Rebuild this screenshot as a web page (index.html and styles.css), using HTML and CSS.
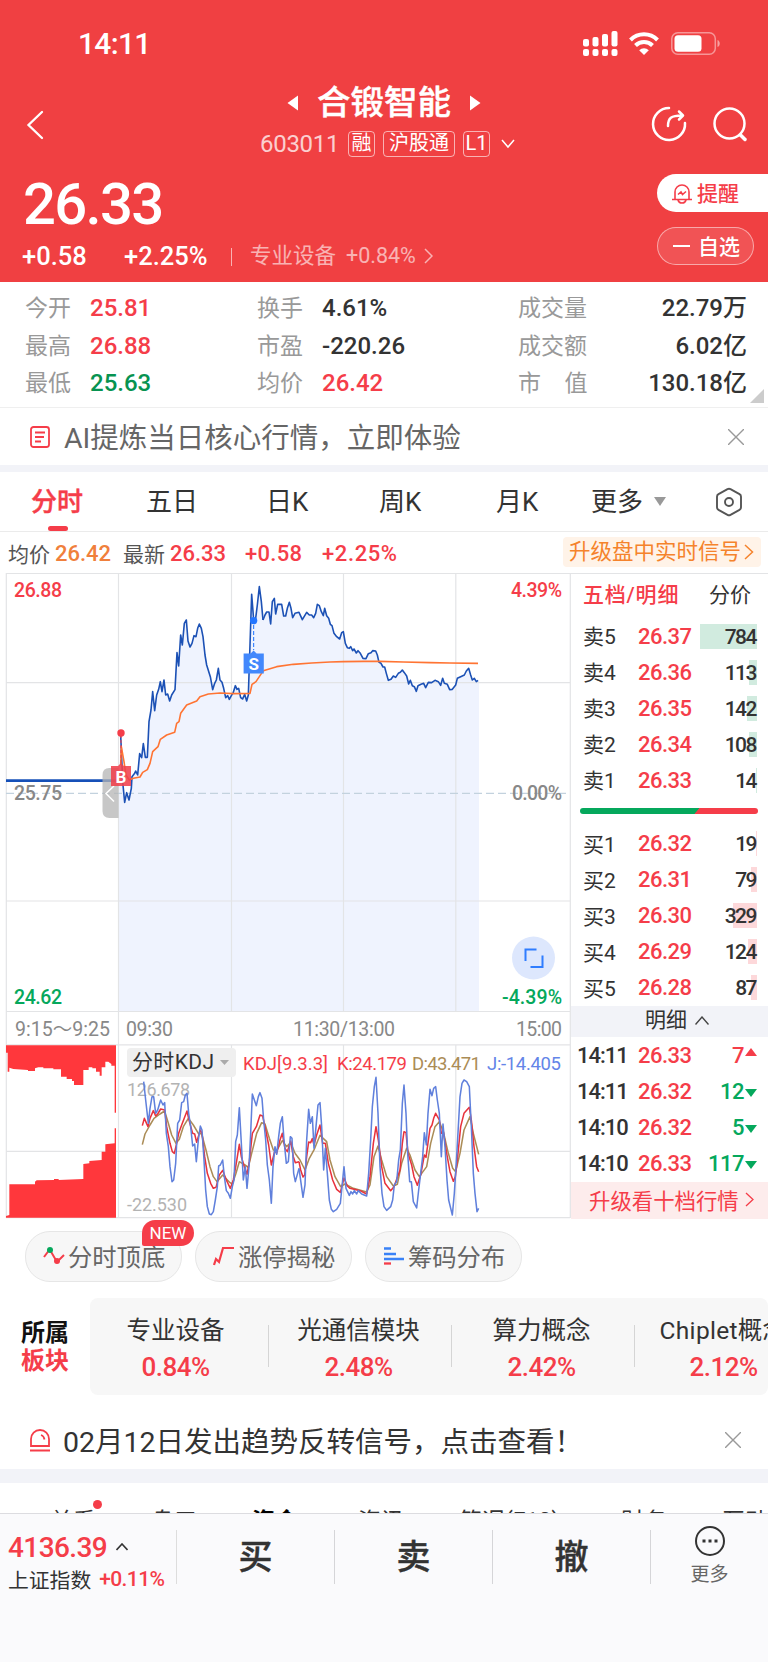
FILE: index.html
```html
<!DOCTYPE html>
<html lang="zh-CN">
<head>
    <meta charset="UTF-8">
    <meta name="viewport" content="width=device-width, initial-scale=1.0">
    <title>合锻智能 603011</title>
    <link rel="stylesheet" href="styles.css">
</head>
<body>

    <header class="header">
        <div class="status-bar">
            <span class="clock">14:11</span>
            <svg class="status-icons" width="140" height="26" viewBox="0 0 140 26" fill="#fff">
                <rect x="1" y="8" width="6" height="7.5" rx="2"/>
                <rect x="10.500" y="6" width="6" height="9.500" rx="2"/>
                <rect x="20" y="3" width="6" height="12.500" rx="2"/>
                <rect x="29.500" y="0" width="6" height="15.500" rx="2"/>
                <rect x="1" y="18" width="6" height="7" rx="2"/>
                <rect x="10.500" y="18" width="6" height="7" rx="2"/>
                <rect x="20" y="18" width="6" height="7" rx="2"/>
                <rect x="29.500" y="18" width="6" height="7" rx="2"/>
                <g fill="none" stroke="#fff" stroke-width="4">
                    <path d="M48.500 9a19 19 0 0 1 27 0"/>
                    <path d="M53.500 14.500a12 12 0 0 1 17 0"/>
                </g>
                <path d="M62 24l-4.800-4.800a7 7 0 0 1 9.600 0z"/>
                <rect x="89.800" y="1.800" width="43.500" height="21.500" rx="6" fill="none" stroke="#fff" stroke-opacity=".45" stroke-width="1.500"/>
                <rect x="92.500" y="4.300" width="27" height="16.500" rx="3.500"/>
                <path d="M135.500 9c3 1 3 6 0 7z" fill-opacity=".5"/>
            </svg>
        </div>

        <div class="title-bar">
            <svg class="back" width="18" height="30" viewBox="0 0 18 30" fill="none" stroke="#fff" stroke-width="2.300" stroke-linecap="round">
                <path d="M16 2L2.500 15L16 28"/>
            </svg>
            <div class="title-box">
                <div class="name-row">
                    <svg width="12" height="16" viewBox="0 0 12 16" fill="#fff"><path d="M0.500 8L11 .5v15z"/></svg>
                    <h1>合锻智能</h1>
                    <svg width="12" height="16" viewBox="0 0 12 16" fill="#fff"><path d="M11.500 8L1 .5v15z"/></svg>
                </div>
                <div class="code-row">
                    <span class="code">603011</span>
                    <span class="tag tag-rong">融</span>
                    <span class="tag tag-hgt">沪股通</span>
                    <span class="tag tag-level">L1</span>
                    <svg width="14" height="10" viewBox="0 0 14 10" fill="none" stroke="#fff" stroke-width="1.500"><path d="M1 1l6 7l6-7"/></svg>
                </div>
            </div>
            <div class="title-actions">
                <svg width="36" height="36" viewBox="0 0 36 36" fill="none" stroke="#fff" stroke-width="2.500" stroke-linecap="round" stroke-linejoin="round">
                    <path d="M18 2A16 16 0 1 0 34 17"/>
                    <path d="M17 20c0-8 3-10.500 14-10.500M28 5.500l4 4l-4 4"/>
                </svg>
                <svg width="36" height="36" viewBox="0 0 36 36" fill="none" stroke="#fff" stroke-width="2.500" stroke-linecap="round">
                    <circle cx="17.500" cy="17.500" r="15"/>
                    <path d="M28.500 29l4.500 4.500" stroke-width="3.500"/>
                </svg>
            </div>
        </div>

        <div class="price-bar">
            <div>
                <div class="price">26.33</div>
                <div class="change-row">
                    <span class="change">+0.58</span>
                    <span class="percent">+2.25%</span>
                    <span class="industry">专业设备</span>
                    <span class="industry-rate">+0.84%</span>
                    <svg width="9" height="16" viewBox="0 0 9 16" fill="none" stroke="#fff" stroke-opacity=".6" stroke-width="1.500"><path d="M1 1l7 7l-7 7"/></svg>
                </div>
            </div>
            <div class="price-actions">
                <button class="alert-button">
                    <svg width="20" height="21" viewBox="0 0 20 21" fill="none" stroke="#f53d49" stroke-width="1.600">
                        <path d="M3 16V9a7 7 0 0 1 14 0v7M0 16.500h20M6 17c1 4 7 4 8 0M6 11.500l3-2.500l1.500 2.500l3.500-3"/>
                    </svg>
                    <span>提醒</span>
                </button>
                <button class="watch-button"><i></i><span>自选</span></button>
            </div>
        </div>
    </header>

    <section class="stats">
        <div class="stat-row">
            <span class="label">今开</span><b class="red">25.81</b>
            <span class="label">换手</span><b>4.61%</b>
            <span class="label">成交量</span><b class="right">22.79万</b>
        </div>
        <div class="stat-row">
            <span class="label">最高</span><b class="red">26.88</b>
            <span class="label">市盈</span><b>-220.26</b>
            <span class="label">成交额</span><b class="right">6.02亿</b>
        </div>
        <div class="stat-row">
            <span class="label">最低</span><b class="dark-green">25.63</b>
            <span class="label">均价</span><b class="red">26.42</b>
            <span class="label">市&emsp;值</span><b class="right">130.18亿</b>
        </div>
        <i class="corner"></i>
    </section>

    <section class="notice ai-notice">
        <svg class="notice-icon" width="20" height="22" viewBox="0 0 20 22" fill="none" stroke="#f53d49" stroke-width="1.800">
            <rect x="1" y="1" width="18" height="20" rx="2.500"/>
            <path d="M5 6.500h10M5 11h9M5 15.500h6"/>
        </svg>
        <span>AI提炼当日核心行情，立即体验</span>
        <svg class="close" width="16" height="16" viewBox="0 0 16 16" stroke="#999" stroke-width="1.400"><path d="M0 0l16 16M16 0L0 16"/></svg>
    </section>

    <nav class="tabs">
        <span class="tab active">分时</span>
        <span class="tab">五日</span>
        <span class="tab">日K</span>
        <span class="tab">周K</span>
        <span class="tab">月K</span>
        <span class="tab more">更多<i></i></span>
        <svg width="28" height="30" viewBox="0 0 28 30" fill="none" stroke="#555" stroke-width="1.900" stroke-linejoin="round">
            <path d="M12.500 2.200q1.500-.8 3 0l9 5q1.500.8 1.500 2.500v10.600q0 1.700-1.500 2.500l-9 5q-1.500.8-3 0l-9-5q-1.500-.8-1.500-2.500V9.700q0-1.700 1.500-2.500z"/>
            <circle cx="14" cy="15" r="4"/>
        </svg>
    </nav>

    <div class="quote-line">
        <span class="q-label">均价</span><span class="q-avg">26.42</span>
        <span class="q-label">最新</span><span class="q-last">26.33</span>
        <span class="q-change">+0.58</span>
        <span class="q-percent">+2.25%</span>
        <a class="upgrade-signal">升级盘中实时信号<svg width="10" height="16" viewBox="0 0 10 16" fill="none" stroke="#f5832c" stroke-width="1.500"><path d="M1 1l7.500 7l-7.500 7"/></svg></a>
    </div>

    <main class="market">
        <svg class="chart" width="571" height="646" viewBox="0 573 571 646">
            <!-- price area -->
            <g transform="translate(0 565) scale(.33333)" fill="#eff3fe">
                <path d="M357 1339V640L362 510L366 600L374 712L380 683L387 705L396 635L407 618L413 630L419 566L425 578L430 536L436 577L442 577L447 470L458 380L464 437L470 390L481 350L486 380L492 345L497 390L503 387L509 408L515 390L525 374L531 263L536 303L542 210L547 240L553 175L559 165L564 228L570 246L582 212L588 215L598 177L604 190L609 215L615 270L620 300L631 335L638 374L649 345L655 310L660 345L666 352L677 398L688 403L706 362L716 370L722 398L734 388L740 408L745 390L755 88L761 165L767 160L778 65L789 165L794 160V1339z"/>
                <path transform="translate(690 0)" d="M98 1339V165L105 150L110 141L117 141L122 177L127 110L133 100L137 147L143 118L155 118L161 153L167 153L178 112L188 158L195 145L207 142L217 164L230 142L238 150L251 158L262 118L268 122L280 152L284 130L290 152L301 178L312 205L329 222L335 203L340 200L346 235L352 248L379 264L384 257L399 280L408 281L415 266L428 257L437 258L447 292L464 306L475 346L490 333L497 337L517 315L530 333L536 357L541 346L559 379L564 362L581 355L587 368L595 352L615 346L632 361L638 340L643 355L652 358L659 374L667 373L677 360L682 340L703 330L716 310L727 345L733 340L739 350L747 346V1339z"/>
            </g>

            <!-- grid -->
            <g stroke="#e3e4e6" stroke-width="1.200" fill="none">
                <path d="M6 573.500H571M6 682.700H570M6 901H570M6 1011.500H570M6 1044.800H570M6 1151.300H570M6 1217.700H570"/>
                <path d="M6.300 573V1218M118.500 573V1218M231.500 573V1011M231.500 1045V1218M343.500 573V1011M343.500 1045V1218M455.800 573V1011M455.800 1045V1218M570.300 573V1218"/>
            </g>
            <path d="M6 793.300H570" stroke="#c3d2de" stroke-width="1.200" stroke-dasharray="8 4"/>

            <!-- price and average lines -->
            <path d="M6 780.700H118" stroke="#1650b8" stroke-width="2.800"/>
            <g transform="translate(0 565) scale(.33333)" fill="none" stroke="#1c51b5" stroke-width="4.800" stroke-linejoin="round">
                <polyline points="362,510 366,600 368,650 374,712 380,683 387,705 394,670 396,635 404,625 407,618 413,630 419,566 425,578 430,536 436,577 442,577 447,470 453,435 458,380 464,437 470,390 476,373 481,350 486,380 492,345 497,390 503,387 509,408 515,390 525,374 531,263 536,303 542,210 547,240 553,175 559,165 564,228 570,246 576,235 582,212 588,215 593,190 598,177 604,190 609,215 615,270 620,300 631,335 638,374 644,355 649,345 655,310 660,345 666,352 671,370 677,398 683,392 688,403 694,392 700,382 706,362 711,373 716,370 722,398 728,402 734,388 740,408 745,390 750,240 755,88 761,165 767,160 772,120 778,65 784,110 789,165"/>
                <polyline transform="translate(690 0)" points="99,165 105,150 110,141 117,141 122,177 127,110 133,100 137,147 143,118 155,118 161,153 167,153 172,130 178,112 183,130 188,158 195,145 207,142 217,164 230,142 238,150 245,150 251,158 257,145 262,118 268,122 274,140 280,152 284,130 290,152 296,160 301,178 306,182 312,205 320,215 329,222 335,203 340,200 346,235 352,248 358,250 362,245 368,257 372,252 379,264 384,257 391,265 399,280 408,281 415,266 423,263 428,257 437,258 442,270 447,292 453,295 459,306 464,306 469,325 475,346 483,343 490,333 497,337 505,325 511,322 517,315 523,323 530,333 536,357 541,346 547,362 553,365 559,379 564,362 573,358 581,355 587,368 595,352 605,353 615,346 625,350 632,361 638,340 643,355 652,358 659,374 667,373 677,360 682,340 692,335 703,330 709,318 716,310 722,330 727,345 733,340 739,350 744,346"/>
            </g>
            <g transform="translate(0 565) scale(.33333)" fill="none" stroke="#ff7433" stroke-width="4.800" stroke-linejoin="round">
                <polyline points="362,600 364,545 372,590 378,630 388,645 400,640 420,636 428,622 442,614 450,595 458,560 474,545 481,523 500,510 524,502 530,475 537,470 542,445 560,420 590,408 600,395 625,387 660,384 700,386 750,385 756,358 768,350 778,335 790,317"/>
                <polyline transform="translate(690 0)" points="100,317 140,305 190,298 245,294 300,291 340,290 400,289 450,289 520,291 600,293 660,294 744,295"/>
            </g>

            <!-- pull handle -->
            <path d="M118.500 768h-9q-7 0-7 7v36q0 7 7 7h9z" fill="#b4b4b4" fill-opacity=".75"/>
            <path d="M114 786l-8 7.500l8 8" fill="none" stroke="#fff" stroke-width="1.500"/>

            <!-- trade markers -->
            <path d="M121 735V764" stroke="#f0414c" stroke-dasharray="3 2"/>
            <circle cx="121" cy="733" r="3.700" fill="#f53d49"/>
            <path d="M111 766h7l3-3l3 3h7v20h-20z" fill="#f0414c" fill-opacity=".88"/>
            <text class="mark" x="121" y="782.500">B</text>
            <path d="M253.600 625V650" stroke="#3d86ff" stroke-width="1.200" stroke-dasharray="4 2"/>
            <circle cx="253.600" cy="620.600" r="3.700" fill="#2476ff"/>
            <path d="M243.600 653.500h7l3-3l3 3h7.200v20h-20.200z" fill="#4288fc"/>
            <text class="mark" x="253.700" y="669.500">S</text>

            <!-- axis labels -->
            <g class="axis">
                <text x="14" y="596.500" textLength="48" fill="#f53d49">26.88</text>
                <text x="511" y="596.500" textLength="51" fill="#f53d49">4.39%</text>
                <text x="14" y="800" textLength="48">25.75</text>
                <text x="512" y="800" textLength="50">0.00%</text>
                <text x="14" y="1003.500" textLength="48" fill="#05a85c">24.62</text>
                <text x="502" y="1003.500" textLength="60" fill="#05a85c">-4.39%</text>
            </g>
            <g class="axis axis-time">
                <text x="15" y="1035.500" textLength="95">9:15～9:25</text>
                <text x="126" y="1035.500" textLength="47">09:30</text>
                <text x="293" y="1035.500" textLength="102">11:30/13:00</text>
                <text x="516" y="1035.500" textLength="46">15:00</text>
            </g>

            <!-- full screen button -->
            <circle cx="533.500" cy="958" r="21.500" fill="#dde7fd"/>
            <path d="M525.500 961v-11.500h11M530.500 967h12v-11.500" fill="none" stroke="#2f7dff" stroke-width="2"/>

            <!-- auction volume -->
            <g transform="translate(0 980) scale(.33333)" fill="#ff373c">
                <path d="M18 196H348V398H344V257H334V252L325 245H316V262H305V287H299V275H288V265H277V262H266V270H250V315H222V303H216V297H200V290H183V268H160V265H130V262H115L105 265V273H84V270L40 267L28 263V275H23V218H18z"/>
                <path d="M18 713H348V445H344V490L316 493V515H305V540L268 543V550L250 552V597L176 600V597H162V600L110 601L105 605V613H28V705L18 708z"/>
            </g>

            <!-- kdj -->
            <rect x="127" y="1048" width="109" height="29" rx="4" fill="#efefef"/>
            <text x="132" y="1069" textLength="82" class="kdj-name">分时KDJ</text>
            <path d="M220 1060h9l-4.500 5z" fill="#aaa"/>
            <g class="kdj-value">
                <text x="243" y="1069.500" textLength="85" fill="#f53d49">KDJ[9.3.3]</text>
                <text x="337" y="1069.500" textLength="70" fill="#f53d49">K:24.179</text>
                <text x="412" y="1069.500" textLength="69" fill="#ab8c56">D:43.471</text>
                <text x="487" y="1069.500" textLength="74" fill="#6485e8">J:-14.405</text>
            </g>
            <g class="kdj-range">
                <text x="127" y="1096" textLength="63">126.678</text>
                <text x="127" y="1210.500" textLength="60">-22.530</text>
            </g>
            <g transform="translate(0 980) scale(.33333)" fill="none" stroke-width="4.600" stroke-linejoin="round">
                <polyline stroke="#ab8c56" points="427,494 435,462 450,435 462,415 480,402 494,393 505,430 515,465 528,490 538,478 550,440 565,415 580,435 595,460 605,462 618,510 630,560 640,590 651,605 668,585 690,608 697,612 708,580 718,545 735,555 745,562 755,520 770,460 785,428 795,432 808,475 820,510 830,512 847,482 860,500 872,487 885,520"/>
                <polyline stroke="#e8323c" points="427,437 433,415 444,440 450,415 460,392 467,408 473,402 482,387 494,390 500,440 510,490 517,515 523,520 530,490 536,460 545,435 561,393 567,420 578,460 584,462 590,487 601,450 606,460 614,530 622,580 632,610 640,625 648,622 658,585 668,571 679,600 691,625 700,600 708,555 718,493 724,530 733,560 741,583 748,545 757,460 769,440 780,405 788,408 797,450 806,495 814,555 825,510 830,520 840,480 847,460 855,505 862,515 872,483 880,530 886,548 897,545"/>
                <polyline stroke="#6080dc" points="431,305 437,360 445,430 450,385 456,350 461,350 467,400 473,390 482,360 489,375 494,368 499,460 505,500 510,560 516,605 521,600 527,550 533,430 539,420 545,368 551,365 556,345 561,340 566,400 572,440 578,498 584,492 589,545 595,480 601,438 606,450 612,540 617,630 622,680 628,702 634,704 640,695 646,660 652,620 656,558 661,555 668,540 673,590 679,632 685,640 691,655 697,620 702,600 707,485 712,465 718,383 724,490 730,600 736,560 741,625 747,560 752,460 757,342 763,360 769,377 775,350 780,338 786,355 791,420 797,480 802,555 808,600 814,670 819,560 825,500 830,523 836,470 841,430 847,410 852,480 859,550 865,545 871,470 876,475 881,580 886,605 897,565"/>
            </g>
            <g transform="translate(270 940) scale(.33333)" fill="none" stroke-width="4.600" stroke-linejoin="round">
                <polyline stroke="#ab8c56" points="75,640 90,660 105,690 118,655 132,630 150,586 170,605 180,660 195,710 212,740 225,732 250,745 290,756 300,735 312,650 324,618 335,660 350,710 370,738 382,733 395,670 410,625 420,645 435,690 448,710 470,680 482,610 495,560 508,545 520,575 535,640 548,685 557,695 570,640 582,570 600,530 610,580 626,643"/>
                <polyline stroke="#e8323c" points="87,665 92,690 99,711 104,705 110,650 116,606 122,608 127,596 132,615 140,585 150,555 158,610 166,610 175,670 188,720 200,748 211,757 222,714 232,738 240,745 270,752 290,762 300,710 310,610 318,560 325,600 335,680 345,730 362,752 372,740 390,690 397,610 402,575 408,578 414,640 425,675 432,710 442,736 452,705 463,645 468,652 480,565 486,555 491,535 497,520 508,540 514,580 520,575 530,640 540,695 550,724 556,710 563,650 572,560 582,520 598,502 604,540 612,620 620,680 626,695"/>
                <polyline stroke="#6080dc" points="87,685 99,772 105,735 110,600 116,508 121,550 127,530 132,625 138,560 144,495 150,488 155,560 161,690 166,625 172,700 178,780 184,808 190,815 200,808 211,790 216,740 222,680 228,745 238,766 243,755 248,762 253,752 260,762 265,752 275,762 290,768 296,700 302,600 307,500 313,440 318,412 324,520 330,680 336,760 342,800 350,811 362,800 368,780 373,735 380,725 386,660 391,630 397,490 402,435 408,520 413,640 419,725 424,725 430,785 440,804 446,750 452,700 458,650 463,578 469,615 474,520 480,448 486,467 491,445 497,440 502,480 508,520 514,650 519,552 525,620 531,720 536,780 547,825 553,760 560,650 565,560 570,470 576,430 582,420 590,425 598,440 604,560 610,700 615,760 621,815 626,805"/>
            </g>
        </svg>

        <aside class="book">
            <div class="book-head"><b>五档/明细</b><span>分价</span></div>
            <div class="order sell"><span>卖5</span><b>26.37</b><em><i style="width:57px"></i>784</em></div>
            <div class="order sell"><span>卖4</span><b>26.36</b><em><i style="width:8px"></i>113</em></div>
            <div class="order sell"><span>卖3</span><b>26.35</b><em><i style="width:10px"></i>142</em></div>
            <div class="order sell"><span>卖2</span><b>26.34</b><em><i style="width:8px"></i>108</em></div>
            <div class="order sell"><span>卖1</span><b>26.33</b><em><i style="width:1px"></i>14</em></div>
            <div class="ratio"></div>
            <div class="order buy"><span>买1</span><b>26.32</b><em><i style="width:1px"></i>19</em></div>
            <div class="order buy"><span>买2</span><b>26.31</b><em><i style="width:6px"></i>79</em></div>
            <div class="order buy"><span>买3</span><b>26.30</b><em><i style="width:24px"></i>329</em></div>
            <div class="order buy"><span>买4</span><b>26.29</b><em><i style="width:9px"></i>124</em></div>
            <div class="order buy"><span>买5</span><b>26.28</b><em><i style="width:6px"></i>87</em></div>
            <div class="detail-head">明细<svg width="14" height="9" viewBox="0 0 14 9" fill="none" stroke="#444" stroke-width="1.400"><path d="M.5 8.500L7 1l6.500 7.500"/></svg></div>
            <div class="tick up"><span>14:11</span><b>26.33</b><em>7</em><i></i></div>
            <div class="tick down"><span>14:11</span><b>26.32</b><em>12</em><i></i></div>
            <div class="tick down"><span>14:10</span><b>26.32</b><em>5</em><i></i></div>
            <div class="tick down"><span>14:10</span><b>26.33</b><em>117</em><i></i></div>
            <a class="upgrade-level">升级看十档行情<svg width="9" height="15" viewBox="0 0 9 15" fill="none" stroke="#f53d49" stroke-width="1.300"><path d="M1 1l7 6.500l-7 6.500"/></svg></a>
        </aside>
    </main>

    <section class="chips">
        <button class="chip">
            <svg width="22" height="20" viewBox="0 0 22 20" fill="none" stroke-width="2"><path d="M1 11l6-8" stroke="#f53d49"/><path d="M7 4l7 12l7-7" stroke="#f53d49"/><circle cx="7" cy="4" r="3" fill="#05a85c"/><circle cx="14" cy="15" r="3" fill="#f53d49"/></svg>
            <span>分时顶底</span>
            <span class="new">NEW</span>
        </button>
        <button class="chip">
            <svg width="22" height="20" viewBox="0 0 22 20" fill="none" stroke="#f53d49" stroke-width="2.200"><path d="M1 19l2-6l3 3l4-14h11"/></svg>
            <span>涨停揭秘</span>
        </button>
        <button class="chip">
            <svg width="22" height="20" viewBox="0 0 22 20" fill="none" stroke="#3a82f7" stroke-width="2.300"><path d="M1 2.500h7M1 8h12M1 13h20"/><path d="M1 17.500h7" stroke="#f53d49"/></svg>
            <span>筹码分布</span>
        </button>
    </section>

    <section class="sectors">
        <div class="sector-title">所属<br><span>板块</span></div>
        <div class="sector-list">
            <div class="sector">专业设备<b>0.84%</b></div>
            <div class="sector">光通信模块<b>2.48%</b></div>
            <div class="sector">算力概念<b>2.42%</b></div>
            <div class="sector">Chiplet概念<b>2.12%</b></div>
        </div>
    </section>

    <section class="notice signal-notice">
        <svg class="notice-icon" width="22" height="23" viewBox="0 0 22 23" fill="none" stroke="#f53d49" stroke-width="1.800">
            <path d="M2 17V10a9 9 0 0 1 18 0v7zM1 21.500h20M12 6q3 1 3.500 4.500"/>
        </svg>
        <span>02月12日发出趋势反转信号，点击查看！</span>
        <svg class="close" width="16" height="16" viewBox="0 0 16 16" stroke="#999" stroke-width="1.400"><path d="M0 0l16 16M16 0L0 16"/></svg>
    </section>

    <nav class="sub-tabs">
        <span class="dot">关系</span>
        <span>盘口</span>
        <span class="active">资金</span>
        <span>资讯</span>
        <span>简况(F10)</span>
        <span>财务</span>
        <span>互动</span>
    </nav>

    <footer class="trade-bar">
        <div class="index">
            <div class="index-value">4136.39<svg width="12" height="8" viewBox="0 0 12 8" fill="none" stroke="#333" stroke-width="1.600"><path d="M.5 7L6 1l5.500 6"/></svg></div>
            <div class="index-name">上证指数<b>+0.11%</b></div>
        </div>
        <div class="trade">买</div>
        <div class="trade">卖</div>
        <div class="trade">撤</div>
        <div class="trade-more">
            <svg width="32" height="32" viewBox="0 0 32 32" fill="none" stroke="#333" stroke-width="2"><circle cx="16" cy="16" r="14"/><path d="M8.500 16h3M14.500 16h3M20.500 16h3" stroke-width="3"/></svg>
            更多
        </div>
    </footer>

</body>
</html>
```
FILE: styles.css
```css
* {
    box-sizing: border-box;
}

body {
    margin: 0;
    width: 768px;
    height: 1662px;
    overflow: hidden;
    background: #fff;
    color: #333;
    font-family: Roboto, "Noto Sans CJK SC", sans-serif;
    white-space: nowrap;
}

b, em, i, h1 {
    font-style: normal;
    font-weight: 500;
}

svg {
    display: block;
    flex: none;
}

button {
    font-family: inherit;
    border: none;
    padding: 0;
}

.red { color: #f53d49; }
.dark-green { color: #079351; }

/* header */
.header {
    height: 282px;
    background: #f04042;
    color: #fff;
}

.status-bar {
    height: 76px;
    padding: 31px 46px 0 78px;
    display: flex;
    justify-content: space-between;
}

.clock {
    font-size: 30px;
    line-height: 26px;
    font-weight: 500;
    letter-spacing: -0.700px;
}

.title-bar {
    height: 90px;
    display: flex;
    align-items: flex-start;
}

.back {
    margin: 34px 0 0 26px;
}

.title-box {
    width: 430px;
    margin-left: 177px;
}

.name-row {
    display: flex;
    align-items: center;
    gap: 18px;
    height: 54px;
    padding-left: 65px;
}

.name-row h1 {
    margin: 0;
    font-size: 33.500px;
    line-height: 54px;
    -webkit-text-stroke: .4px #fff;
}

.code-row {
    display: flex;
    align-items: center;
    height: 27px;
    padding-left: 38px;
}

.code {
    width: 88px;
    font-size: 24px;
    letter-spacing: -0.300px;
    opacity: .75;
}

.tag {
    height: 26px;
    border: 1.500px solid rgba(255, 255, 255, .6);
    border-radius: 4px;
    font-size: 20px;
    line-height: 22px;
    text-align: center;
    margin-right: 8px;
}

.tag-rong { width: 27px; }
.tag-hgt { width: 72px; }
.tag-level { width: 27px; margin-right: 11px; }

.name-row,
.code-row {
    margin-left: 0;
}

.name-row { padding-left: 66px; }
.code-row { padding-left: 39px; }

.title-actions {
    display: flex;
    gap: 25px;
    margin: 30px 0 0 0;
}

.price-bar {
    display: flex;
    justify-content: space-between;
}

.price {
    padding-left: 23px;
    height: 74px;
    line-height: 76px;
    font-size: 58px;
    font-weight: 500;
    letter-spacing: -1.700px;
}

.change-row {
    display: flex;
    align-items: center;
    height: 32px;
    padding-left: 22px;
    font-size: 25.500px;
    font-weight: 500;
}

.change { width: 102px; }
.percent { width: 107px; }

.industry {
    position: relative;
    width: 98px;
    padding-left: 2px;
    margin-left: 17px;
    line-height: 29px;
    margin-top: -2px;
    font-size: 21.500px;
    font-weight: 400;
    opacity: .6;
}

.industry::before {
    content: "";
    position: absolute;
    left: -17px;
    top: 7px;
    width: 1px;
    height: 18px;
    background: #fff;
}

.industry-rate {
    width: 78px;
    margin-top: -2px;
    font-size: 21.500px;
    font-weight: 400;
    opacity: .6;
}

.price-actions {
    width: 111px;
    padding-top: 8px;
}

.alert-button,
.watch-button {
    display: flex;
    align-items: center;
    height: 38px;
    font-size: 21px;
    font-weight: 500;
}

.alert-button span,
.watch-button span {
    margin-top: -2px;
}

.alert-button {
    width: 111px;
    padding-left: 15px;
    gap: 5px;
    border-radius: 19px 0 0 19px;
    background: #fff;
    color: #f53d49;
}

.watch-button {
    width: 97px;
    margin-top: 15px;
    padding-left: 15px;
    gap: 8px;
    border: 1px solid rgba(255, 255, 255, .5);
    border-radius: 19px;
    background: rgba(255, 255, 255, .1);
    color: #fff;
}

.watch-button i {
    width: 17px;
    height: 2px;
    background: #fff;
}

/* stats */
.stats {
    position: relative;
    height: 126px;
    padding-top: 8px;
    border-bottom: 1.500px solid #efefef;
}

.stat-row {
    display: grid;
    grid-template-columns: 65px 167px 65px 196px 80px 149px;
    padding-left: 25px;
    height: 37.700px;
    line-height: 37px;
    font-size: 24px;
}

.stat-row .label {
    color: #999;
    font-size: 23px;
}

.stat-row .right {
    text-align: right;
}

.corner {
    position: absolute;
    right: 4px;
    bottom: 4px;
    border-left: 14px solid transparent;
    border-bottom: 14px solid #ccc;
}

/* notices */
.notice {
    display: flex;
    align-items: center;
    font-size: 28.500px;
}

.notice .close {
    margin-left: auto;
}

.notice span {
    margin-top: -2px;
}

.ai-notice {
    height: 64px;
    padding: 0 24px 0 30px;
    border-bottom: 7px solid #f2f3f8;
    color: #666;
}

.ai-notice span {
    margin-left: 14px;
}

.signal-notice {
    height: 88px;
    padding: 16px 27px 0 29px;
    border-bottom: 14px solid #f2f3f8;
}

.signal-notice span {
    margin-left: 12px;
}

/* period tabs */
.tabs {
    display: flex;
    align-items: center;
    height: 60px;
    border-bottom: 1.500px solid #ebebeb;
    padding-left: 31px;
    font-size: 26px;
    color: #333;
}

.tab {
    position: relative;
    width: 115px;
    line-height: 58px;
}

.tab:nth-child(2) { width: 120px; }
.tab:nth-child(3) { width: 113px; }
.tab:nth-child(4) { width: 117px; }
.tab:nth-child(5) { width: 95px; }

.tab.active {
    color: #f53d49;
    font-weight: 500;
    -webkit-text-stroke: .4px #f53d49;
}

.tab.active::after {
    content: "";
    position: absolute;
    left: 17px;
    bottom: 0;
    width: 20px;
    height: 5px;
    border-radius: 3px;
    background: #f53d49;
}

.tab.more {
    display: flex;
    align-items: center;
    gap: 11px;
    width: 124px;
}

.tab.more i {
    border: 6.500px solid transparent;
    border-top: 9px solid #999;
    border-bottom: 0;
}

/* quote line */
.quote-line {
    display: flex;
    align-items: center;
    height: 41px;
    padding: 2px 7px 0 8px;
    font-size: 22px;
    font-weight: 500;
    color: #f53d49;
}

.quote-line .q-label {
    width: 47px;
    margin-top: -2px;
    color: #555;
    font-size: 21px;
    font-weight: 400;
}

.q-avg { width: 68px; color: #f0803c; }
.q-last { width: 75px; }
.q-change { width: 77px; letter-spacing: .3px; }
.q-percent { letter-spacing: .6px; }

.upgrade-signal {
    display: flex;
    align-items: center;
    gap: 3px;
    width: 198px;
    height: 30px;
    margin: -3px 0 0 auto;
    padding: 0 0 1px 6px;
    border-radius: 4px;
    background: #fff3e8;
    color: #f5832c;
    font-size: 21.500px;
    line-height: 28px;
    font-weight: 400;
}

/* chart */
.market {
    display: flex;
    height: 646px;
}

.axis {
    font-size: 19.500px;
    fill: #888;
    font-weight: 500;
}

.axis-time {
    font-weight: 400;
}

.mark {
    font-size: 17px;
    font-weight: 700;
    fill: #fff;
    text-anchor: middle;
}

.kdj-name { font-size: 21px; fill: #333; }
.kdj-value { font-size: 18.500px; font-weight: 400; }
.kdj-range { font-size: 18px; fill: #b3b3b3; }

/* order book */
.book {
    width: 197px;
    border-top: 1px solid #e3e4e6;
}

.book-head {
    display: flex;
    justify-content: space-between;
    height: 44px;
    line-height: 43px;
    padding: 0 17px 0 12px;
    font-size: 21px;
}

.book-head b {
    color: #f53d49;
    letter-spacing: .8px;
}

.order,
.tick {
    display: flex;
    align-items: center;
    height: 36.100px;
    padding: 0 11px 0 12px;
    font-size: 22px;
}

.order span {
    width: 55px;
    margin-top: -2px;
    font-size: 21px;
}

.order b,
.tick b {
    width: 62px;
    letter-spacing: -.5px;
    color: #f53d49;
}

.order em {
    position: relative;
    width: 57px;
    height: 25px;
    line-height: 26px;
    text-align: right;
    font-size: 21px;
    letter-spacing: -1.500px;
    padding-right: 1px;
}

.order i {
    position: absolute;
    z-index: -1;
    top: 0;
    right: 0;
    height: 25px;
}

.sell i { background: #d1ebdf; }
.buy i { background: #fdd8da; }

.ratio {
    height: 6px;
    margin: 10px 10px 11px 9px;
    border-radius: 3px;
    background: linear-gradient(130deg, #05a85c 65%, #f53d49 65.500%);
}

.detail-head {
    display: flex;
    align-items: center;
    gap: 8px;
    height: 31px;
    padding: 0 0 2px 74px;
    background: #f2f3f8;
    font-size: 21px;
    line-height: 28px;
}

.tick {
    height: 36.200px;
    padding-left: 6px;
}

.tick span {
    width: 61px;
    font-weight: 500;
    letter-spacing: -1px;
}

.tick em {
    width: 44px;
    text-align: right;
    letter-spacing: -.5px;
}

.tick i {
    margin-left: 1px;
    border: 6.500px solid transparent;
}

.up em { color: #f53d49; }
.up i { border-bottom: 8px solid #f53d49; border-top: 0; margin-bottom: 6px; }
.down em { color: #05a85c; }
.down i { border-top: 8px solid #05a85c; border-bottom: 0; margin-top: 3px; }

.upgrade-level {
    display: flex;
    align-items: center;
    gap: 6px;
    height: 37px;
    padding: 0 0 2px 18px;
    background: #fdecec;
    color: #f53d49;
    font-size: 21.400px;
}

/* chips */
.chips {
    display: flex;
    gap: 13px;
    height: 79px;
    padding: 12px 0 0 25px;
}

.chip {
    position: relative;
    display: flex;
    align-items: center;
    gap: 3px;
    width: 157px;
    height: 51px;
    padding: 0 0 2px 17px;
    border: 1px solid #e6e6e6;
    border-radius: 25px;
    background: #f7f7f7;
    color: #666;
    font-size: 24.300px;
}

.new {
    position: absolute;
    left: 116px;
    top: -12px;
    width: 52px;
    height: 26px;
    border-radius: 13px 13px 13px 2px;
    background: #f53d49;
    color: #fff;
    font-size: 17px;
    line-height: 27px;
    text-align: center;
}

/* sectors */
.sectors {
    display: flex;
    height: 97px;
}

.sector-title {
    width: 90px;
    padding: 21px 0 0 21px;
    font-size: 24px;
    font-weight: 700;
    line-height: 28px;
    color: #111;
}

.sector-title span {
    color: #f53d49;
}

.sector-list {
    display: flex;
    width: 678px;
    overflow: hidden;
    border-radius: 8px;
    background: #f7f7f7;
}

.sector {
    position: relative;
    flex: none;
    width: 183px;
    padding: 14px 2px 0 0;
    font-size: 24.500px;
    line-height: 37px;
    text-align: center;
}

.sector:first-child {
    width: 178px;
    padding-right: 7px;
}

.sector:last-child {
    letter-spacing: .3px;
    padding-right: 4px;
}

.sector + .sector::before {
    content: "";
    position: absolute;
    left: 0;
    top: 27px;
    width: 1px;
    height: 42px;
    background: #d5d5d5;
}

.sector b {
    display: block;
    font-size: 26px;
    letter-spacing: -.5px;
    color: #f53d49;
}

/* lower tabs, cut by the trade bar */
.sub-tabs {
    display: flex;
    height: 30px;
    padding: 26px 0 0 50px;
    overflow: hidden;
    font-size: 23px;
    line-height: 26px;
}

.sub-tabs span { width: 101px; flex: none; }
.sub-tabs span:nth-child(3) { width: 106px; }
.sub-tabs span:nth-child(5) { width: 162px; }
.sub-tabs .active { color: #000; font-weight: 700; }

.sub-tabs .dot {
    position: relative;
}

.dot::after {
    content: "";
    position: absolute;
    left: 43px;
    top: -9px;
    width: 9px;
    height: 9px;
    border-radius: 50%;
    background: #f53d49;
}

/* trade bar */
.trade-bar {
    display: flex;
    height: 149px;
    padding-top: 16px;
    border-top: 1px solid #dcdce0;
    background: #fafafc;
}

.index {
    width: 177px;
    height: 54px;
    padding-left: 8px;
    border-right: 1px solid #ddd;
}

.index-value {
    display: flex;
    align-items: center;
    gap: 9px;
    height: 34px;
    color: #f53d49;
    font-size: 28px;
    font-weight: 500;
    letter-spacing: -.6px;
}

.index-name {
    display: flex;
    align-items: center;
    height: 29px;
    font-size: 20.800px;
}

.index-name b {
    margin-left: 8px;
    color: #f53d49;
    font-size: 21px;
    letter-spacing: -.6px;
}

.trade {
    width: 158px;
    height: 54px;
    border-right: 1px solid #d5d5d8;
    font-size: 34px;
    font-weight: 500;
    line-height: 54px;
    text-align: center;
    -webkit-text-stroke: .4px #333;
}

.trade-more {
    display: flex;
    flex-direction: column;
    align-items: center;
    width: 117px;
    margin-top: -5px;
    font-size: 19px;
    line-height: 36px;
    color: #666;
}
```
